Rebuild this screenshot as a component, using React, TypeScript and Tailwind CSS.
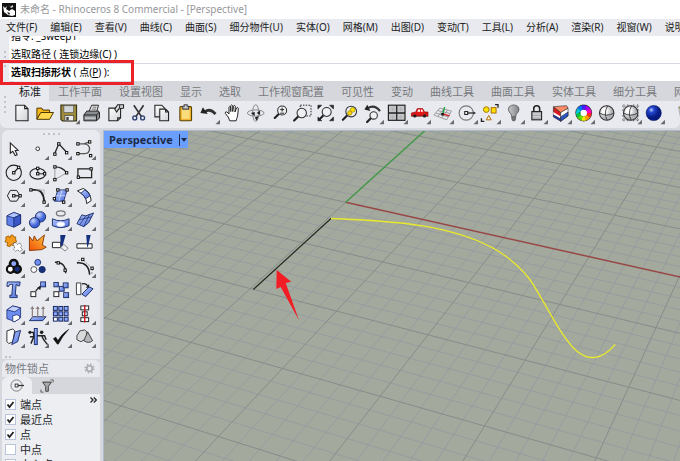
import type { ReactNode } from 'react';

const MENUS = [
  '文件(F)', '编辑(E)', '查看(V)', '曲线(C)', '曲面(S)', '细分物件(U)', '实体(O)', '网格(M)',
  '出图(D)', '变动(T)', '工具(L)', '分析(A)', '渲染(R)', '视窗(W)', '说明(H)',
];

const TABS = [
  '标准', '工作平面', '设置视图', '显示', '选取', '工作视窗配置', '可见性', '变动',
  '曲线工具', '曲面工具', '实体工具', '细分工具', '网格工具',
];

const SNAPS = [
  { id: 'end', label: '端点', on: true },
  { id: 'near', label: '最近点', on: true },
  { id: 'point', label: '点', on: true },
  { id: 'mid', label: '中点', on: false },
  { id: 'cen', label: '中心点', on: false },
];

interface Tool { name: string; art: ReactNode; fly?: boolean }

// control point marker
const N = ({ x, y }: { x: number; y: number }) => (
  <rect x={x - 1.2} y={y - 1.2} width="2.4" height="2.4" fill="#fff" stroke="#111" strokeWidth="1" />
);

const Lens = ({ x, y, r = 4.6, children }: { x: number; y: number; r?: number; children?: ReactNode }) => (
  <g>
    <path d={`M${x - r * 0.75} ${y + r * 0.75}L${x - r - 3} ${y + r + 3}`} stroke="#222" strokeWidth="2.2" strokeLinecap="round" />
    <circle cx={x} cy={y} r={r} fill="#eef0f2" stroke="#333" strokeWidth="1.1" />
    {children}
  </g>
);

const Sphere = () => (
  <g>
    <circle r="7.4" fill="url(#ballGrey)" stroke="#333" strokeWidth="1.1" />
    <path d="M-7.4 0Q0 4.500 7.400 0M1 -7.400Q-3.500 0 .5 7.400" fill="none" stroke="#333" strokeWidth=".9" />
  </g>
);

const TOP_TOOLS: Tool[] = [
  { name: '新建', art: <path d="M-6 -8H3L6.500 -4.500V8H-6ZM3 -8V-4.500H6.500" fill="url(#paper)" stroke="#222" strokeWidth="1.1" /> },
  {
    name: '打开',
    art: (
      <g stroke="#4a3300" strokeWidth="1">
        <path d="M-8 6V-5H-3L-2 -3H5V0H-4Z" fill="#f9b919" />
        <path d="M-8 6.500L-4 -.5H9L5 6.500Z" fill="#ffd84d" />
      </g>
    ),
  },
  {
    name: '保存', fly: true,
    art: (
      <g>
        <path d="M-8 -8H8V8H-6.500L-8 6.500Z" fill="#a08d3c" stroke="#3c3618" strokeWidth="1.2" />
        <path d="M-5 -7.500H5V-.5H-5Z" fill="#d4d7d9" stroke="#555" strokeWidth=".7" />
        <path d="M-4 2.500H5V8H-4Z" fill="#eee" stroke="#333" strokeWidth=".7" />
        <path d="M-2.500 4H0V7.500H-2.500Z" fill="#444" />
      </g>
    ),
  },
  {
    name: '打印',
    art: (
      <g stroke="#222" strokeWidth="1">
        <path d="M-3 -1L0 -8H7L5 -1Z" fill="#f4f4f4" />
        <path d="M-8 2L-5 -2H7L8 0V5L5 8H-8Z" fill="#8b8f94" />
        <path d="M-8 2H5L8 -1M5 2V8" fill="none" />
        <path d="M-7 5.200H4" stroke="#eee" />
        <path d="M1 -6H5M0 -4H4.500" strokeWidth=".7" />
      </g>
    ),
  },
  {
    name: '文件属性',
    art: (
      <g stroke="#222" strokeWidth="1.1">
        <path d="M-7 -5H5V5L2 8H-7Z" fill="url(#paper)" />
        <path d="M5 5H2V8" fill="none" />
        <path d="M-1 -4L2 -8.500H8V-5L3 -4L1 -1Z" fill="#d8dadd" />
        <path d="M4 -8V-5" />
      </g>
    ),
  },
  {
    name: '剪切',
    art: (
      <g fill="none">
        <path d="M-5 -8L3 4M5 -8L-3 4" stroke="#333" strokeWidth="1.7" />
        <circle cx="-4" cy="5" r="2" stroke="#2a3f70" strokeWidth="1.4" />
        <circle cx="4" cy="5" r="2" stroke="#2a3f70" strokeWidth="1.4" />
      </g>
    ),
  },
  {
    name: '复制',
    art: (
      <g stroke="#222" strokeWidth="1.100" fill="url(#paper)">
        <path d="M-7 -8H0L3 -5V4H-7Z" />
        <path d="M-2 -4H4L7 -1V8H-2ZM4 -4V-1H7" />
      </g>
    ),
  },
  {
    name: '粘贴',
    art: (
      <g stroke="#5a4200" strokeWidth="1.100">
        <rect x="-6" y="-6.500" width="12" height="14.500" rx="1" fill="#f0b32e" />
        <rect x="-4" y="-4.500" width="8" height="10.500" fill="#fbdc7d" stroke="none" />
        <path d="M-3 -4V-7H-1.500V-8.500H1.500V-7H3V-4Z" fill="#c9cdd2" stroke="#444" />
      </g>
    ),
  },
  {
    name: '撤销', fly: true,
    art: (
      <g>
        <path d="M-4 -1Q1 -5.500 7 1" fill="none" stroke="#333" strokeWidth="2.800" />
        <path d="M-8.500 0L-6 -6L-1 1Z" fill="#222" />
      </g>
    ),
  },
  {
    name: '平移',
    art: (
      <path
        d="M-3 8Q-4 4 -7.500 .5Q-8 -1.500 -6 -1.200L-3.800 1V-6Q-3 -7.800 -2 -6V-1.500V-7.500Q-1 -9.300 0 -7.500V-1.500L.8 -7Q2 -8.700 2.700 -7L2.300 -1L4 -5.200Q5.500 -6.300 5.800 -4.500L5 3Q4 6 3.500 8Z"
        fill="#fff" stroke="#222" strokeWidth="1"
      />
    ),
  },
  {
    name: '旋转视图',
    art: (
      <g fill="none" stroke="#888" strokeWidth="1">
        <ellipse rx="8.500" ry="3.200" />
        <ellipse rx="3.200" ry="8.500" />
        <path d="M-5 0L-1 -1V3ZM1 0L4.500 -2.500V2ZM-1 4.500L3 3L1 8Z" fill="#222" stroke="none" />
      </g>
    ),
  },
  { name: '缩放', art: <Lens x={2.500} y={-2.500}><path d="M.5 -3.500H4.500M2.500 -5.500V-1.500M.5 .2H4.500" stroke="#222" strokeWidth="1" /></Lens> },
  {
    name: '框选缩放',
    art: (
      <g>
        <rect x="-2.500" y="-8" width="11" height="11" fill="none" stroke="#222" strokeWidth="1" strokeDasharray="1.500 1.300" />
        <Lens x={-1} y={0} r={4.800} />
      </g>
    ),
  },
  {
    name: '缩放至最大范围',
    art: (
      <g>
        <Lens x={1} y={-1} />
        <path d="M-8 -8H-4L-8 -4ZM8 -8H4L8 -4ZM-8 8H-4L-8 4ZM8 8H4L8 4Z" fill="#222" stroke="#222" strokeWidth=".6" />
      </g>
    ),
  },
  {
    name: '缩放选取物件',
    art: (
      <Lens x={1.500} y={-1.500} r={5.500}>
        <circle cx="3" cy="-3.200" r="2.500" fill="#ffe000" stroke="#8a7a00" strokeWidth=".6" />
        <circle cx="0" cy="0" r="2.300" fill="#ffd000" stroke="#8a7a00" strokeWidth=".6" />
      </Lens>
    ),
  },
  {
    name: '复原视图', fly: true,
    art: (
      <g>
        <Lens x={1} y={2.500} r={3.800} />
        <path d="M-5 -5Q2 -9 7.500 -2" fill="none" stroke="#333" strokeWidth="2.200" />
        <path d="M-8.500 -3.500L-5.500 -8.500L-2.500 -2Z" fill="#222" />
      </g>
    ),
  },
  {
    name: '四个工作视窗', fly: true,
    art: (
      <g>
        <rect x="-8.500" y="-8" width="17" height="15.500" fill="#c3c5c7" stroke="#222" strokeWidth="1.200" />
        <path d="M-4 -6V-2M-6.500 -4H-2M4 -6V-2M2 -4H6.500M-4 2V6M-6.500 4H-2M4 2V6M2 4H6.500" stroke="#adb0b4" strokeWidth=".7" />
        <path d="M0 -8V7.500M-8.500 0H8.500" stroke="#222" strokeWidth="1.300" />
      </g>
    ),
  },
  {
    name: '设置视图', fly: true,
    art: (
      <g>
        <path d="M-9 3.500H9" stroke="#777" strokeWidth=".8" />
        <path d="M-8.500 3V0L-4 -1L-2.500 -4.500H3L5 -1H8.500V3Z" fill="#e21717" stroke="#8d0b0b" strokeWidth=".7" />
        <path d="M-2.500 -1.200L-1.500 -3.500H.3V-1.200ZM1.200 -1.200V-3.500H2.500L3.600 -1.200Z" fill="#fff" />
        <circle cx="-5" cy="3" r="1.700" fill="#222" />
        <circle cx="5" cy="3" r="1.700" fill="#222" />
      </g>
    ),
  },
  {
    name: '设置工作平面', fly: true,
    art: (
      <g fill="none" strokeWidth=".8">
        <path d="M-9 2L-3 -5L9 -2L4 7ZM-7 0L5.500 4M-5 -2.500L7.500 .5M-5 3.500L1 -4M-1 5L5 -3" stroke="#888" />
        <path d="M0 1L2 -6" stroke="#18a030" strokeWidth="1.400" />
        <path d="M0 1L7 3" stroke="#d22" strokeWidth="1.400" />
        <path d="M-1.500 0H1V2.500H-1.500Z" fill="#111" />
      </g>
    ),
  },
  {
    name: '物件锁点', fly: true,
    art: (
      <g fill="none" stroke="#777" strokeWidth="1.100">
        <circle cx="-.5" r="7.300" />
        <path d="M0 0H7" stroke="#222" strokeWidth="1.300" />
        <path d="M7 -1.500L9.500 0L7 1.500Z" fill="#222" stroke="none" />
        <rect x="-2" y="-1.500" width="3" height="3" fill="#fff" stroke="#222" />
      </g>
    ),
  },
  {
    name: '选取', fly: true,
    art: (
      <g strokeWidth="1">
        <circle cx="-3.500" cy="-3.500" r="2.900" fill="#ffe000" stroke="#9a7a00" />
        <rect x="1.500" y="-5.500" width="5" height="5.500" fill="#ffe000" stroke="#b06a00" />
        <path d="M-1 2.500L1.500 7H-3.500Z" fill="#f6f0d8" stroke="#b06a00" />
        <path d="M5.500 -8.500H8.500V-5.500M-8.500 5.500V8.500H-5.500" fill="none" stroke="#222" strokeWidth="1.300" />
      </g>
    ),
  },
  {
    name: '隐藏物件', fly: true,
    art: (
      <g stroke="#666" strokeWidth="1">
        <path d="M-2 4Q-2 1 -4.500 -1Q-6.500 -4 -4.500 -6.500Q0 -10 4.500 -6.500Q6.500 -4 4.500 -1Q2 1 2 4Z" fill="url(#bulb)" />
        <path d="M-2 4H2L1.500 7.500Q0 8.700 -1.500 7.500Z" fill="#777" />
      </g>
    ),
  },
  {
    name: '锁定物件', fly: true,
    art: (
      <g>
        <path d="M-3 -1V-4.500Q-3 -7.500 0 -7.500T3 -4.500V-1" fill="none" stroke="#222" strokeWidth="1.600" />
        <rect x="-5" y="-1.500" width="10" height="8.500" fill="#aaadb0" stroke="#222" strokeWidth="1.100" />
        <path d="M-4 1H4M-4 4H4" stroke="#e5e7ea" strokeWidth="1" />
      </g>
    ),
  },
  {
    name: '图层', fly: true,
    art: (
      <g stroke="#222" strokeWidth=".6">
        <path d="M-7.500 -6V4L0 8.500V-1Z" fill="#d71920" />
        <path d="M-7.500 -1V1.500L0 6V3.500Z" fill="#fff" stroke="none" />
        <path d="M-7.500 1.500V4L0 8.500V6Z" fill="#1f3f9c" stroke="none" />
        <path d="M0 -1L7.500 -5V3L0 8.500Z" fill="#fff" />
        <path d="M0 4L7.500 -1V3L0 8.500Z" fill="#2a55c8" />
        <path d="M-7.500 -6.500L6 -7.500L7.500 -5L0 -.5Z" fill="#ff8a66" />
      </g>
    ),
  },
  {
    name: '物件属性', fly: true,
    art: (
      <g fill="none" strokeWidth="4.600">
        <circle r="5.700" stroke="#333" strokeWidth="5.800" />
        {['#ff2a1a', '#ff9a00', '#f2f200', '#5be000', '#00c24a', '#00c8d8', '#0074ff', '#3a20ff', '#a000f0', '#ff00c0'].map((c, i) => (
          <circle key={c} r="5.700" stroke={c} pathLength="100" strokeDasharray="10.500 89.500" strokeDashoffset={-i * 10} />
        ))}
        <circle r="3.300" fill="#fff" stroke="none" />
      </g>
    ),
  },
  { name: '着色模式', art: <Sphere /> },
  {
    name: '着色工作视窗', fly: true,
    art: (
      <g>
        <path d="M-9 -7H9M-9 -3H9M-9 3H9M-9 7H9M-7 -9V9M-3 -9V9M3 -9V9M7 -9V9" stroke="#555" strokeWidth=".8" strokeDasharray="1.500 .8" />
        <Sphere />
      </g>
    ),
  },
  { name: '渲染', fly: true, art: <circle r="7.800" fill="url(#ballBlue)" stroke="#0a1a66" strokeWidth=".6" /> },
  {
    name: '灯光', fly: true,
    art: (
      <g stroke="#777" strokeWidth=".6">
        <path d="M1 -6L6 -8L10 2L3 5Z" fill="#fffdf0" />
        <path d="M1 -6L6 -8L8 -6L3 -3Z" fill="#d8c04c" />
      </g>
    ),
  },
];

const LINE = { fill: 'none', stroke: '#222', strokeWidth: 1.300 };
const BLUE = { fill: 'url(#blue)', stroke: '#14255f', strokeWidth: 0.900 };

const SIDE_TOOLS: Tool[] = [
  { name: '选取', art: <path d="M-3.500 -6V4.500L-1 2.500L1.500 7L3.500 6L1.500 1.800L4.500 1.500Z" fill="#fff" stroke="#222" strokeWidth="1.100" /> },
  { name: '点', fly: true, art: <circle r="1.900" fill="#fff" stroke="#333" strokeWidth="1" /> },
  { name: '多重直线', fly: true, art: <g><path d="M-6.500 5.500L-2 -5L6.500 4" {...LINE} /><N x={-6} y={5.500} /><N x={-2} y={-5} /><N x={6} y={4} /></g> },
  {
    name: '曲线', fly: true,
    art: <g><path d="M-6.500 -5H-1Q5 -5 5 1M-6.500 5H0Q5 5 5 -1M-1 -5L5 -7" {...LINE} stroke="#555" /><N x={-7} y={-5} /><N x={-7} y={5} /><N x={5} y={-7} /><N x={6} y={7} /></g>,
  },
  { name: '圆', fly: true, art: <g><circle r="7.800" {...LINE} strokeWidth={1.100} /><path d="M0 0L5 -5.500" {...LINE} /><N x={0} y={0} /><N x={5} y={-5.500} /></g> },
  { name: '椭圆', fly: true, art: <g><ellipse cy="1" rx="8" ry="5.500" {...LINE} strokeWidth={1.100} /><path d="M0 -4V1H7" {...LINE} strokeWidth={1} /><N x={0} y={-4.500} /><N x={0} y={1} /><N x={7} y={1} /></g> },
  {
    name: '圆弧', fly: true,
    art: <g><path d="M-6 -6V7L6 0" {...LINE} stroke="#888" strokeWidth={0.800} /><path d="M-6 -6Q2 -6 6 0" {...LINE} /><N x={-6} y={-6} /><N x={6} y={0} /><N x={-6} y={7} /></g>,
  },
  { name: '矩形', fly: true, art: <g><rect x="-7" y="-4" width="14" height="9" {...LINE} /><N x={6.500} y={-4} /><N x={-6.500} y={4.500} /></g> },
  { name: '多边形', fly: true, art: <g><path d="M-6.500 0L-3.500 -5.500H3L6.500 0L3 5.500H-3.500Z" {...LINE} strokeWidth={1} /><path d="M0 0H6" {...LINE} /><N x={0} y={0} /><N x={6.500} y={0} /></g> },
  { name: '曲线圆角', fly: true, art: <g><path d="M-7 -6H-2Q6 -6 6.500 6" fill="none" stroke="#222" strokeWidth="1.800" /><path d="M-2 -6H6.500V-1" {...LINE} stroke="#aaa" strokeWidth={0.800} /><N x={-7} y={-6} /><N x={6.500} y={6.500} /></g> },
  {
    name: '曲面', fly: true,
    art: <g><path d="M-3 -6H6.500L3 5.500H-6.500Z" {...BLUE} /><path d="M1.500 -6L-2 5.500M-5 0H5" stroke="#dce6ff" strokeWidth=".7" /><N x={-3} y={-6} /><N x={6.500} y={-6} /><N x={3} y={6.500} /><N x={-6.500} y={3} /></g>,
  },
  {
    name: '曲面圆角', fly: true,
    art: <g><path d="M-7.500 -5L-1.500 -7.500Q6 -4 6.500 5L2 8Q2 0 -7.500 -5Z" fill="#fff" stroke="#222" strokeWidth="1" /><path d="M-4 -2.500L0 -6Q4 -4 5.500 0L1 3Q-1 -1 -4 -2.500Z" {...BLUE} /></g>,
  },
  {
    name: '立方体', fly: true,
    art: <g stroke="#1a2c70" strokeWidth=".8"><path d="M-7 -4L0 -7.500L7 -5V4L0 7.500L-7 5Z" fill="#5e80e8" /><path d="M-7 -4L0 -7.500L7 -5L0 -2Z" fill="#b4c6ff" /><path d="M0 -2L7 -5V4L0 7.500Z" fill="#3a58c4" /></g>,
  },
  { name: '布尔运算', fly: true, art: <g stroke="#14255f" strokeWidth=".9"><circle cx="2.800" cy="-3" r="5.300" fill="url(#ballLight)" /><circle cx="-3.200" cy="3" r="5.300" fill="url(#ballLight)" /></g> },
  {
    name: '投影', fly: true,
    art: <g><ellipse cy="-6.500" rx="4.500" ry="2.500" {...LINE} stroke="#777" /><path d="M-8.500 -1Q0 3 8.500 -1V6Q0 10 -8.500 6Z" {...BLUE} /><ellipse cy="4.500" rx="4" ry="2.300" fill="#fff" stroke="#dce6ff" strokeWidth="1" /></g>,
  },
  { name: '网格', fly: true, art: <g><path d="M-8 4L-3 -5L1 -4L9 -7L4 3L-1 7Z" {...BLUE} /><path d="M-6 0L7 -3M-1 7L5 -6M-5 5L1 -4" fill="none" stroke="#14255f" strokeWidth=".7" /></g> },
  {
    name: '组合', fly: true,
    art: (
      <g strokeWidth=".9">
        <path d="M-8 -6L-5 -7L-4 -5Q-3 -9 -1 -8L0 -6L2 -6V-3L3 -1L0 0V3L-3 2L-4 4L-7 3L-6 0L-9 -1L-8 -3Z" fill="#f49a1c" stroke="#a35b00" />
        <path d="M-1 1L2 0L4 2L6 0L8 3L7 5L9 7L6 9L4 7L2 9L0 7L1 4Z" fill="#fff" stroke="#666" strokeDasharray="1.600 .6" />
      </g>
    ),
  },
  { name: '炸开', art: <path d="M-8.500 8V-6.500L-5 -2L-3.500 -7L-.7 -2L6.800 -8L4.700 2.300L8.700 4.500L4 7Z" fill="url(#fire)" stroke="#7c3200" strokeWidth=".9" /> },
  {
    name: '修剪',
    art: <g><path d="M-8.500 -.5H0V5H-8.500Z" fill="#fff" stroke="#222" strokeWidth="1" /><path d="M3 1.500L7.500 5.500L4.500 8.500L0 5Z" fill="#eee" stroke="#777" strokeWidth=".9" /><path d="M-.5 -8H5L2 2.500L0 4Z" fill="#14307e" /></g>,
  },
  { name: '分割', art: <g><path d="M-8 1H7.500V5.500H-8Z" fill="#fff" stroke="#222" strokeWidth="1" /><path d="M1.500 -8H6L3.500 3L2.500 5Z" fill="#14307e" /></g> },
  {
    name: '群组', fly: true,
    art: <g stroke="#111" strokeWidth="1.400"><circle r="4.500" cy="-3" fill="#111" /><circle cx="-3.200" cy="2.500" r="4.200" fill="#111" /><circle cx="3.500" cy="2.500" r="4.200" fill="#111" /><circle cy="-3.200" r="3.200" fill="#8ea8ff" /><circle cx="-3.500" cy="2.500" r="3.200" fill="#fff" /><circle cx="3.500" cy="2.500" r="3.200" fill="#17307e" /></g>,
  },
  { name: '解散群组', art: <g stroke="#14255f" strokeWidth=".9"><circle cx="0" cy="-4.500" r="3" fill="#6f90f4" /><circle cx="-4" cy="2.800" r="3" fill="#fff" stroke="#444" /><circle cx="4.500" cy="2.800" r="3.200" fill="#17307e" /></g> },
  { name: '编辑点', art: <g><path d="M-6 -4.500Q5 -5 5 6.500" {...LINE} strokeWidth={1.500} /><N x={-2.500} y={-4} /><N x={4.500} y={3.500} /></g> },
  {
    name: '控制点', fly: true,
    art: <g><path d="M-8 -4Q4 -5 5 8" {...LINE} strokeWidth={1.600} /><path d="M-7 -6L-2 -7.500L8 2L7 8" stroke="#777" strokeWidth=".8" fill="none" strokeDasharray="2 1.200" /><N x={-2} y={-7.500} /><N x={7.500} y={1.500} /></g>,
  },
  { name: '文字', art: <path d="M-6.500 -8H6.500L6 -4H4Q4 -5.500 2.500 -5.500L1.500 5.500H3.500V8H-4V5.500H-2L-1 -5.500H-3.500Q-5 -5.500 -5 -3.500H-7Z" {...BLUE} /> },
  { name: '移动', fly: true, art: <g><rect x="-7" y="2" width="5" height="5" fill="#fff" stroke="#222" /><path d="M-2 1L3 -4" {...LINE} /><path d="M3.500 -3.500L-.5 -2.500L2.500 .5Z" fill="#222" /><rect x="3" y="-8" width="5" height="5" {...BLUE} /></g> },
  {
    name: '复制',
    art: <g><rect x="-7" y="-7.500" width="4.500" height="4.500" {...BLUE} /><rect x="-1.500" y="-3.500" width="5" height="5" {...BLUE} /><rect x="2.500" y="-7" width="5" height="5" {...BLUE} /><rect x="3" y="3" width="5" height="5" {...BLUE} /><rect x="-7" y="2" width="5" height="5" fill="#fff" stroke="#222" /></g>,
  },
  {
    name: '旋转',
    art: <g><path d="M-8.500 -7H-4V5H-8.500Z" fill="#fff" stroke="#444" strokeWidth="1" /><path d="M4.500 -3L8.500 -1L1 7L-3 4.500Z" {...BLUE} /><path d="M-3 -6Q1 -7 3 -4" {...LINE} /><path d="M4.500 -6V-2H1Z" fill="#222" /></g>,
  },
  {
    name: '实体倒角', fly: true,
    art: <g stroke="#1a2c70" strokeWidth=".8"><path d="M-7 -4L-1 -8L7 -6V4L1 8L-7 5Z" fill="#6d8ef0" /><path d="M-7 -4L-1 -8L7 -6L1 -2Z" fill="#c3d1ff" /><path d="M-1 8V2L3 1L6 2V5L1 8Z" fill="#fff" /></g>,
  },
  { name: '挤出', fly: true, art: <g><path d="M-5 3H8.500L5 7H-8.500Z" {...BLUE} /><path d="M-5.500 4V-6M0 4V-6M5.500 4V-6" stroke="#8a7d7d" strokeWidth="1.200" /><path d="M-7.500 -5L-5.500 -8L-3.500 -5ZM-2 -5L0 -8L2 -5ZM3.500 -5L5.500 -8L7.500 -5Z" fill="#8a7d7d" /></g> },
  {
    name: '阵列', fly: true,
    art: <g stroke="#14255f" strokeWidth="1">{[-7.500, -2, 3.500].map((y) => [-7.500, -2, 3.500].map((x) => <rect key={`${x}${y}`} x={x} y={y} width="4" height="4" fill={x < -5 && y > 2 ? '#fff' : '#8fabff'} />))}</g>,
  },
  {
    name: '对齐', fly: true,
    art: <g fill="#fff" stroke="#222" strokeWidth="1"><rect x="-4" y="-8" width="8" height="4" /><rect x="-2.500" y="-2" width="5" height="4" /><rect x="-4" y="4" width="8" height="4" /><path d="M0 -9V9" stroke="#d3121c" strokeWidth="1.400" /></g>,
  },
  {
    name: '变形', fly: true,
    art: <g><path d="M-7 -6L-1 -8L1 -6L-1 5L-5 7L-7 5Z" fill="#fff" stroke="#333" strokeWidth="1" /><path d="M1.500 -5L7 -6.500L4 5L-2 8Z" {...BLUE} /></g>,
  },
  {
    name: '镜像', fly: true,
    art: (
      <g>
        <path d="M-7 -4.500H-4.500L-4 -1H7L8.500 3M-8 0H-4L-7 7M4 -1L6 3L10 8" fill="none" stroke="#222" strokeWidth="1.500" />
        <rect x="-3.500" y="-8.500" width="3" height="16.500" {...BLUE} />
        <circle cx="-8" cy="-4.500" r="1.600" fill="#222" />
        <circle cx="4" cy="-4.500" r="1.800" fill="#222" />
      </g>
    ),
  },
  { name: '检查', fly: true, art: <path d="M-7.500 2L-5 .5L-3 4Q1 -3 8 -7.500Q1 0 -2.500 7.500H-3.500Z" fill="#111" stroke="#111" strokeWidth=".7" /> },
  {
    name: '基本体', fly: true,
    art: <g stroke="#333" strokeWidth=".9"><path d="M-8 -1L-5 -6L0 -7L2 -5V2L-4 5L-8 3Z" fill="#d9dadc" /><path d="M-1 4L3 -5L8 4Q4 7.500 -1 4Z" fill="#b5b7ba" /></g>,
  },
];

function ToolButton({ tool }: { tool: Tool }) {
  return (
    <button aria-label={tool.name} className="block min-h-0 min-w-0 rounded hover:bg-white/60">
      <svg viewBox="-12 -12 24 24" className="block h-full w-full overflow-visible" aria-hidden="true">
        {tool.art}
        {tool.fly && <path d="M11.500 7V11.500H7Z" fill="#66686d" />}
      </svg>
    </button>
  );
}

function Grip({ className }: { className: string }) {
  return (
    <div className={`flex gap-[3px] ${className}`}>
      {[0, 1, 2, 3].map((i) => (
        <i key={i} className="size-[2px] shrink-0 rounded-full bg-[#b4b6bb]" />
      ))}
    </div>
  );
}

// construction plane to screen, one unit = one major grid square
const project = (u: number, v: number) => {
  const w = 1 - 0.025 * u + 0.066 * v;
  const x = (345.7 + 66.4 * u + 64.2 * v) / w;
  const y = (202.3 + 11.7 * u - 24.1 * v) / w;
  return `${x.toFixed(1)} ${y.toFixed(1)}`;
};

const gridPath = (major: boolean) => {
  let d = '';
  for (let i = -60; i <= 60; i++) {
    if ((i % 5 === 0) !== major) continue;
    const t = i / 5;
    // the positive halves of both axes are drawn in colour
    if (t >= -8) d += `M${project(-12, t)}L${project(t === 0 ? 0 : 12, t)}`;
    d += `M${project(t, -8)}L${project(t, t === 0 ? 0 : 12)}`;
  }
  return d;
};

function Viewport() {
  return (
    <main className="relative min-w-0 flex-1 overflow-hidden border-t border-l border-[#aeb9c9] bg-[#a3a99c]">
      <svg viewBox="104 131 576 330" preserveAspectRatio="xMinYMin slice" className="absolute inset-0 h-full w-full" fill="none" aria-label="透视图">
        <path d={gridPath(false)} stroke="#959ba2" strokeWidth="0.9" />
        <path d={gridPath(true)} stroke="#868c8c" strokeWidth="1" />
        <path d={`M${project(0, 0)}L${project(12, 0)}`} stroke="#984747" strokeWidth="1.500" />
        <path d={`M${project(0, 0)}L${project(0, 12)}`} stroke="#45984a" strokeWidth="1.500" />
        <path d="M331 218.500L253.300 289.500" stroke="#26281f" strokeWidth="1.200" />
        <path
          d="M331 218.500C370 220 405 222 432.700 227.700S490 243 510 259.500S533 284 543.300 301.700S565 341 576.700 351S602 360 615.300 344.300"
          stroke="#e9e92d" strokeWidth="1.300"
        />
        <path d="M276.700 270L291.300 281.700L285.700 283L299 320.300L280.700 287L276.300 289Z" fill="#f21c24" />
      </svg>
      <div className="relative flex w-fit items-center bg-[#6b9fff] text-[#1d2a44]">
        <h2 className="px-[5px] font-['Open_Sans',sans-serif] text-[11px] leading-[17px] font-bold">Perspective</h2>
        <button aria-label="视图菜单" className="my-[2px] ml-[1px] border-l border-[#1d2a44] px-[1px] py-1">
          <svg viewBox="0 0 6 4" className="h-[4px] w-[6px]"><path d="M0 0H6L3 4Z" fill="#1d2a44" /></svg>
        </button>
      </div>
    </main>
  );
}

function SnapPanel() {
  return (
    <section className="mr-[3px] ml-[2px] flex-1 overflow-hidden">
      <header className="flex h-[18px] items-center justify-between rounded-t-md border-t border-[#d6d8dd] bg-[#e8eaef] pr-[5px] pl-[3px]">
        <h3 className="text-[11px] leading-4 text-[#77797e]">物件锁点</h3>
        <button aria-label="设置">
          <svg viewBox="-6 -6 12 12" className="size-[11px]" fill="none" stroke="#a9abb0">
            <circle r="3" strokeWidth="1.800" />
            <circle r="4.700" strokeWidth="1.600" strokeDasharray="1.800 1.890" />
          </svg>
        </button>
      </header>
      <div className="flex h-[17px] bg-[#d6d7dc]">
        <button aria-label="锁点" className="flex w-[30px] items-center justify-center rounded-t-md bg-[#eceef2]">
          <svg viewBox="-8 -8 16 16" className="size-[15px]" fill="none">
            <circle r="6" cx="-1" stroke="#777" strokeWidth="1" />
            <path d="M-1 0H7" stroke="#333" strokeWidth="1.300" />
            <rect x="-2.500" y="-1.500" width="3" height="3" fill="#fff" stroke="#333" />
          </svg>
        </button>
        <button aria-label="过滤器" className="flex w-[30px] items-center justify-center">
          <svg viewBox="-8 -8 16 16" className="size-[14px]" fill="none">
            <path d="M-5 -4.500H5L1.500 .5V6H-1.500V.5Z" fill="#aaa" stroke="#333" />
            <path d="M4 -7H7V-4M-7 4V7H-4" stroke="#555" />
          </svg>
        </button>
      </div>
      <div className="flex items-start justify-between bg-[#eceef2] pt-[3px] pr-[3px] pl-[3px]">
        <ul>
          {SNAPS.map((s) => (
            <li key={s.id} className="flex h-[15px] items-center gap-1">
              <span className="relative flex size-[11px]">
                <input
                  id={s.id} type="checkbox" defaultChecked={s.on}
                  className="peer size-[11px] appearance-none border border-[#b9c3da] bg-white"
                />
                <svg viewBox="0 0 11 11" className="pointer-events-none absolute inset-0 hidden peer-checked:block">
                  <path d="M2.500 5.500L4.500 8L8.500 3" fill="none" stroke="#222" strokeWidth="1.800" />
                </svg>
              </span>
              <label htmlFor={s.id} className="text-[11px] leading-[15px] text-[#26282c]">{s.label}</label>
            </li>
          ))}
        </ul>
        <button aria-label="展开">
          <svg viewBox="0 0 7 6" className="h-[6px] w-[7px]" fill="none" stroke="#222" strokeWidth="1.200"><path d="M.5 .5L3 3L.5 5.500M3.800 .5L6.300 3L3.800 5.500" /></svg>
        </button>
      </div>
    </section>
  );
}

export default function App() {
  return (
    <div className="flex h-screen flex-col overflow-hidden bg-[#d6d8dd] font-['Noto_Sans','Noto_Sans_CJK_SC',sans-serif] text-[10px] text-[#222]">
      <svg className="absolute size-0" aria-hidden="true">
        <defs>
          <linearGradient id="paper" x2="1" y2="1"><stop stopColor="#fff" /><stop offset="1" stopColor="#cfd1d4" /></linearGradient>
          <linearGradient id="blue" x2="1" y2="1"><stop stopColor="#b2c5ff" /><stop offset="1" stopColor="#4d70dc" /></linearGradient>
          <linearGradient id="bulb" x2="1"><stop stopColor="#c9cacc" /><stop offset="1" stopColor="#808285" /></linearGradient>
          <linearGradient id="fire" y1="1" x2="1" y2="0"><stop stopColor="#f0520a" /><stop offset="1" stopColor="#ffc23a" /></linearGradient>
          <radialGradient id="ballGrey" cx=".35" cy=".35"><stop offset=".3" stopColor="#fff" /><stop offset="1" stopColor="#b0b2b5" /></radialGradient>
          <radialGradient id="ballBlue" cx=".35" cy=".3"><stop stopColor="#b9d0ff" /><stop offset=".35" stopColor="#2447cf" /><stop offset="1" stopColor="#071a80" /></radialGradient>
          <radialGradient id="ballLight" cx=".35" cy=".3"><stop stopColor="#cbd8ff" /><stop offset="1" stopColor="#3f63d4" /></radialGradient>
        </defs>
      </svg>

      {/* title bar */}
      <header className="flex h-[19px] shrink-0 items-center gap-1 bg-white pl-[2px]">
        <svg viewBox="0 0 14 14" className="size-[14px]">
          <rect width="14" height="14" fill="#111" />
          <path d="M1 3L3 5L5 3L4 6L7 8L10 6L13 8V12L10 13L6 12L2 9Z" fill="#fff" />
          <path d="M6 1L8 4L11 2V4L9 5Z" fill="#ddd" />
          <path d="M5 9L8 10L7 12Z" fill="#111" />
        </svg>
        <h1 className="whitespace-nowrap text-[#96989b]">未命名 - Rhinoceros 8 Commercial - [Perspective]</h1>
      </header>

      <nav className="flex h-[17px] shrink-0 items-center gap-[13px] overflow-hidden bg-[#e8eaef] pl-[6px] whitespace-nowrap">
        {MENUS.map((m) => <button key={m} className="shrink-0">{m}</button>)}
      </nav>

      {/* command history and prompt */}
      <section className="shrink-0 bg-[#e8eaef]">
        <div className="flex h-[27px]">
          <div className="flex w-[9px] flex-col items-center justify-end gap-[3px] pb-[5px]">
            <i className="size-[2px] rounded-full bg-[#b4b6bb]" />
            <i className="size-[2px] rounded-full bg-[#b4b6bb]" />
          </div>
          <div className="flex flex-1 flex-col justify-end overflow-hidden bg-white pl-[2px] leading-[18px] text-black">
            <p>指令: _Sweep1</p>
            <p>选取路径 ( 连锁边缘(C) )</p>
          </div>
        </div>
        <div className="relative flex h-[18px]">
          <div className="flex w-[9px] justify-center pt-[2px]">
            <i className="size-[2px] rounded-full bg-[#b4b6bb]" />
          </div>
          <div className="flex h-full flex-1 items-center border-t border-[#d8d9e6] bg-white pl-[2px] text-black">
            <label htmlFor="command" className="whitespace-nowrap"><b>选取扫掠形状</b> ( 点(<u>P</u>) ):</label>
            <input id="command" className="min-w-0 flex-1 bg-transparent pl-1 outline-none" />
          </div>
          <div className="pointer-events-none absolute -top-[3px] -bottom-[4px] left-0 z-10 w-[134px] border-[3px] border-[#ec2229]" />
        </div>
      </section>

      {/* toolbar */}
      <section className="flex shrink-0 rounded-b-md bg-[#e8eaef]">
        <Grip className="w-[10px] flex-col items-center justify-center" />
        <div className="min-w-0 flex-1 overflow-hidden">
          <div className="flex h-[20px] overflow-hidden bg-[#d6d7dc]">
            {TABS.map((t, i) => (
              <button
                key={t}
                className={`shrink-0 rounded-t-md pr-2 pl-[9px] text-[11px] leading-[22px] whitespace-nowrap ${i === 0 ? 'bg-[#e8eaef] text-[#222]' : 'text-[#77797d]'}`}
              >
                {t}
              </button>
            ))}
          </div>
          <div className="grid h-[24px] w-[679px] grid-cols-[repeat(29,minmax(0,1fr))]">
            {TOP_TOOLS.map((t) => <ToolButton key={t.name} tool={t} />)}
          </div>
          <div className="h-[3px]" />
        </div>
      </section>

      <div className="flex min-h-0 flex-1 pt-[2px]">
        <aside className="flex w-[103px] shrink-0 flex-col">
          <div className="mr-[3px] ml-[2px] h-[229px] rounded-t-md bg-[#e8eaef]">
            <Grip className="justify-center pt-[3px] pb-[2px]" />
            <div className="grid h-[212px] w-[94px] grid-cols-4 grid-rows-9">
              {SIDE_TOOLS.map((t, i) => <ToolButton key={`${t.name}${i}`} tool={t} />)}
            </div>
            <div className="flex gap-[2px] pt-[7px] pl-[3px]">
              <i className="size-[2px] rounded-full bg-[#b4b6bb]" />
              <i className="size-[2px] rounded-full bg-[#b4b6bb]" />
            </div>
          </div>
          <SnapPanel />
        </aside>
        <Viewport />
      </div>
    </div>
  );
}
